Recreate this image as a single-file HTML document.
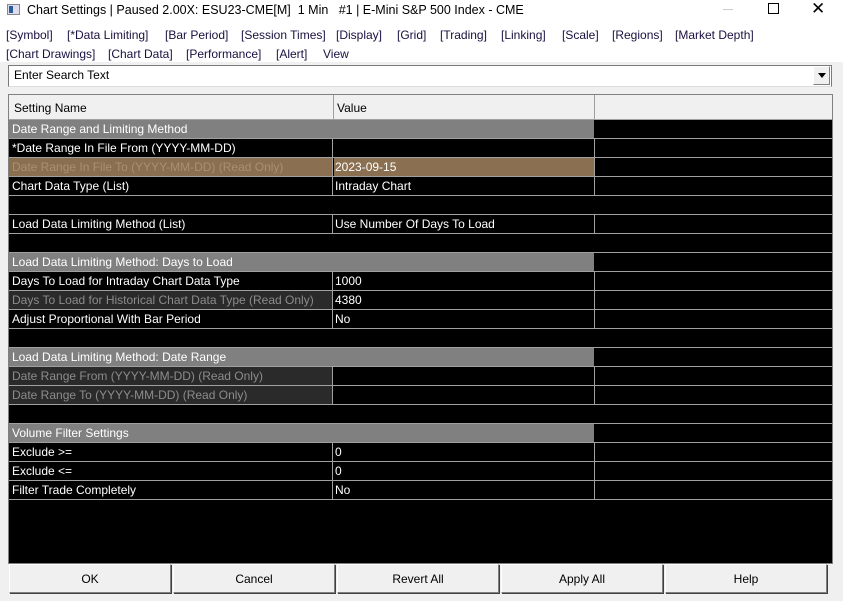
<!DOCTYPE html>
<html><head><meta charset="utf-8"><style>
*{margin:0;padding:0;box-sizing:border-box}
body{width:843px;height:601px;background:#f0f0f0;font-family:"Liberation Sans",sans-serif;font-size:12px;color:#000;position:relative;overflow:hidden}
.a{position:absolute;white-space:nowrap}
.top{position:absolute;left:0;top:0;width:843px;height:62px;background:#fff}
.m{position:absolute;color:#1a1040}
.row{position:absolute;left:9px;width:823px;height:19px;border-bottom:1px solid #a0a0a0}
.c{position:absolute;top:0;height:18px;line-height:19px;padding-left:3px;color:#fff;overflow:hidden;white-space:nowrap}
.c1{left:0;width:324px;border-right:1px solid #a0a0a0}
.c2{left:325px;width:261px;border-right:1px solid #a0a0a0;padding-left:1px}
.g{background:#808080}
.ro{color:#8c8c8c;background:#2a2a2a}
.br{background:#8a7050}
.btn{position:absolute;top:564px;height:29px;background:#f0f0f0;border:1px solid #fff;border-right-color:#808080;border-bottom-color:#808080;box-shadow:1px 1px 0 #404040;text-align:center;line-height:28px}
</style></head><body>
<div class="top"></div>
<div class="a" style="left:7px;top:4px;width:13px;height:11px;background:#dde;border:1px solid #888"><div style="position:absolute;left:1px;top:1px;width:4px;height:7px;background:#2a5c9a"></div></div>
<div class="a" style="left:27px;top:3px;font-size:12.5px">Chart Settings | Paused 2.00X: ESU23-CME[M]&nbsp; 1 Min &nbsp; #1 | E-Mini S&amp;P 500 Index - CME</div>
<div class="a" style="left:723px;top:9px;width:10px;height:1px;background:#ccc"></div>
<div class="a" style="left:768px;top:3px;width:11px;height:11px;border:1px solid #000"></div>
<div class="a" style="left:811px;top:-1px;font-size:17px">✕</div>
<div class="m a" style="left:6px;top:28px">[Symbol]</div>
<div class="m a" style="left:67px;top:28px">[*Data Limiting]</div>
<div class="m a" style="left:165px;top:28px">[Bar Period]</div>
<div class="m a" style="left:241px;top:28px">[Session Times]</div>
<div class="m a" style="left:336px;top:28px">[Display]</div>
<div class="m a" style="left:397px;top:28px">[Grid]</div>
<div class="m a" style="left:440px;top:28px">[Trading]</div>
<div class="m a" style="left:501px;top:28px">[Linking]</div>
<div class="m a" style="left:562px;top:28px">[Scale]</div>
<div class="m a" style="left:612px;top:28px">[Regions]</div>
<div class="m a" style="left:675px;top:28px">[Market Depth]</div>
<div class="m a" style="left:6px;top:47px">[Chart Drawings]</div>
<div class="m a" style="left:108px;top:47px">[Chart Data]</div>
<div class="m a" style="left:186px;top:47px">[Performance]</div>
<div class="m a" style="left:276px;top:47px">[Alert]</div>
<div class="m a" style="left:323px;top:47px">View</div>
<div class="a" style="left:8px;top:65px;width:824px;height:22px;background:#fff;border:1px solid #7a7a7a;border-bottom-color:#ddd"></div>
<div class="a" style="left:14px;top:68px">Enter Search Text</div>
<div class="a" style="left:813px;top:66px;width:17px;height:19px;background:#f0f0f0;border:1px solid #fff;border-right-color:#808080;border-bottom-color:#808080"></div>
<div class="a" style="left:818px;top:73px;width:0;height:0;border-left:4px solid transparent;border-right:4px solid transparent;border-top:5px solid #000"></div>
<div class="a" style="left:8px;top:94px;width:825px;height:470px;background:#000;border:1px solid #808080"></div>
<div class="a" style="left:9px;top:95px;width:823px;height:25px;background:#f0f0f0;border-bottom:1px solid #a0a0a0"></div>
<div class="a" style="left:333px;top:95px;width:1px;height:25px;background:#a0a0a0"></div>
<div class="a" style="left:594px;top:95px;width:1px;height:25px;background:#a0a0a0"></div>
<div class="a" style="left:14px;top:101px">Setting Name</div>
<div class="a" style="left:337px;top:101px">Value</div>

<div class="row" style="top:120px"><div class="c c1 g" style="width:585px;border:0">Date Range and Limiting Method</div></div>
<div class="row" style="top:139px"><div class="c c1">*Date Range In File From (YYYY-MM-DD)</div><div class="c c2"></div></div>
<div class="row" style="top:158px"><div class="c c1 br" style="color:#a89070">Date Range In File To (YYYY-MM-DD) (Read Only)</div><div class="c c2 br">2023-09-15</div></div>
<div class="row" style="top:177px"><div class="c c1">Chart Data Type (List)</div><div class="c c2">Intraday Chart</div></div>
<div class="row" style="top:196px"></div>
<div class="row" style="top:215px"><div class="c c1">Load Data Limiting Method (List)</div><div class="c c2">Use Number Of Days To Load</div></div>
<div class="row" style="top:234px"></div>
<div class="row" style="top:253px"><div class="c c1 g" style="width:585px;border:0">Load Data Limiting Method: Days to Load</div></div>
<div class="row" style="top:272px"><div class="c c1">Days To Load for Intraday Chart Data Type</div><div class="c c2">1000</div></div>
<div class="row" style="top:291px"><div class="c c1 ro">Days To Load for Historical Chart Data Type (Read Only)</div><div class="c c2">4380</div></div>
<div class="row" style="top:310px"><div class="c c1">Adjust Proportional With Bar Period</div><div class="c c2">No</div></div>
<div class="row" style="top:329px"></div>
<div class="row" style="top:348px"><div class="c c1 g" style="width:585px;border:0">Load Data Limiting Method: Date Range</div></div>
<div class="row" style="top:367px"><div class="c c1 ro">Date Range From (YYYY-MM-DD) (Read Only)</div><div class="c c2"></div></div>
<div class="row" style="top:386px"><div class="c c1 ro">Date Range To (YYYY-MM-DD) (Read Only)</div><div class="c c2"></div></div>
<div class="row" style="top:405px"></div>
<div class="row" style="top:424px"><div class="c c1 g" style="width:585px;border:0">Volume Filter Settings</div></div>
<div class="row" style="top:443px"><div class="c c1">Exclude &gt;=</div><div class="c c2">0</div></div>
<div class="row" style="top:462px"><div class="c c1">Exclude &lt;=</div><div class="c c2">0</div></div>
<div class="row" style="top:481px"><div class="c c1">Filter Trade Completely</div><div class="c c2">No</div></div>

<div class="btn" style="left:9px;width:162px">OK</div>
<div class="btn" style="left:173px;width:162px">Cancel</div>
<div class="btn" style="left:337px;width:162px">Revert All</div>
<div class="btn" style="left:501px;width:162px">Apply All</div>
<div class="btn" style="left:665px;width:162px">Help</div>
</body></html>
